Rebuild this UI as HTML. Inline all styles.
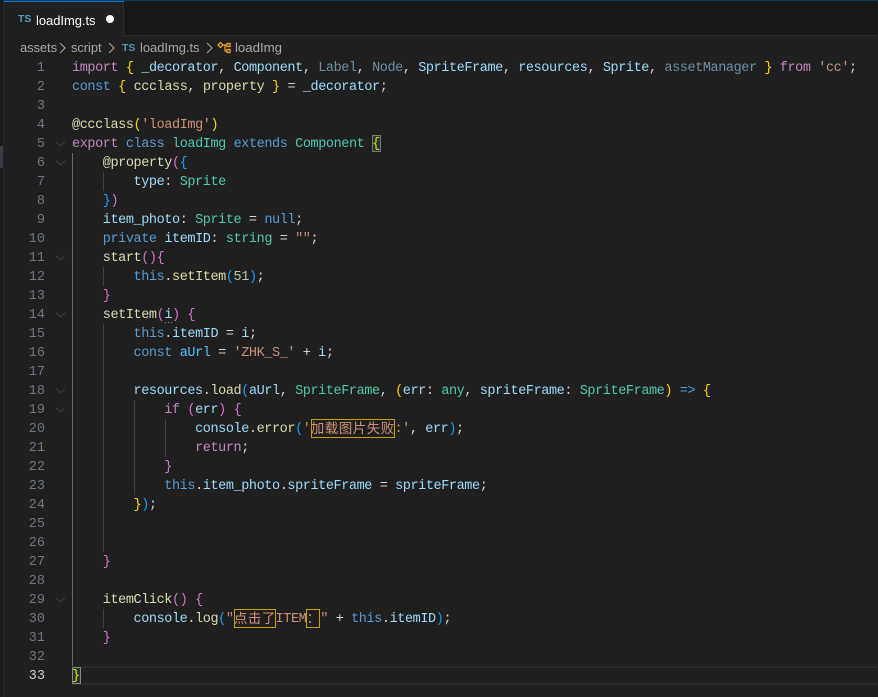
<!DOCTYPE html>
<html><head><meta charset="utf-8">
<style>
html,body{margin:0;padding:0;background:#1f1f1f}
#r{position:relative;width:878px;height:697px;overflow:hidden;background:#1f1f1f;font-family:"Liberation Mono",monospace}
.a{position:absolute}
.l{position:absolute;left:72px;height:19px;margin-top:1px;line-height:19px;font-size:13.5px;letter-spacing:-.41px;white-space:pre;color:#d4d4d4;font-family:"Liberation Mono","Noto Sans CJK SC",monospace}
.n{position:absolute;left:0;width:45px;text-align:right;height:19px;margin-top:1px;font:13.5px/19px "Liberation Mono",monospace;color:#6e7681}
.f{position:absolute;left:56px;width:9px;height:9px}
.g{position:absolute;width:1px}
.k{color:#c586c0}.b{color:#569cd6}.t{color:#4ec9b0}.v{color:#9cdcfe}.y{color:#dcdcaa}.s{color:#ce9178}.d{color:#6b8fa5}.c{color:#4fc1ff}
.h1{color:#ffd700}.h2{color:#da70d6}.h3{color:#179fff}
.z{display:inline-block;position:relative;top:-2px;width:14px;text-align:center;font-size:13.5px;letter-spacing:0;font-family:"Noto Sans CJK SC",sans-serif;line-height:19px;vertical-align:top}
.u{position:absolute;border:1px solid #c9a000;box-sizing:border-box;height:19px}
.ui{font-family:"Liberation Sans",sans-serif}
</style></head><body><div id="r">
<div class="a" style="left:0;top:0;width:878px;height:36px;background:#181818"></div>
<div class="a" style="left:0;top:0;width:878px;height:1px;background:#0b3a5c"></div>
<div class="a" style="left:4px;top:1px;width:120px;height:35px;background:#1f1f1f;border-right:1px solid #2b2b2b;box-sizing:border-box"></div>
<div class="a" style="left:4px;top:1px;width:120px;height:1px;background:#0078d4"></div>
<div class="a" style="left:124px;top:35px;width:754px;height:1px;background:#2b2b2b"></div>
<div class="a" style="left:0;top:0;width:3px;height:697px;background:#1a1a1a"></div>
<div class="a" style="left:3px;top:1px;width:1px;height:696px;background:#262626"></div>
<div class="a" style="left:0;top:146px;width:3px;height:22px;background:#3a3a40"></div>
<div class="a ui" style="left:18px;top:13px;font-size:10.5px;font-weight:700;color:#519aba;line-height:12px">TS</div>
<div class="a ui" style="left:36px;top:11px;font-size:13px;line-height:19px;color:#fff;letter-spacing:-.05px">loadImg.ts</div>
<div class="a" style="left:106px;top:15px;width:8px;height:8px;border-radius:50%;background:#fff"></div>

<div class="a ui" style="left:20px;top:38px;font-size:13px;line-height:19px;color:#a9a9a9;letter-spacing:-.1px">assets</div>
<svg class="a" style="left:59px;top:42px" width="8" height="12"><path d="M1 1L6 6L1 11" fill="none" stroke="#a9a9a9" stroke-width="1"/></svg>
<div class="a ui" style="left:71px;top:38px;font-size:13px;line-height:19px;color:#a9a9a9;letter-spacing:-.1px">script</div>
<svg class="a" style="left:108px;top:42px" width="8" height="12"><path d="M1 1L6 6L1 11" fill="none" stroke="#a9a9a9" stroke-width="1"/></svg>
<div class="a ui" style="left:122px;top:42px;font-size:10.5px;font-weight:700;color:#519aba;line-height:12px">TS</div>
<div class="a ui" style="left:140px;top:38px;font-size:13px;line-height:19px;color:#a9a9a9;letter-spacing:-.05px">loadImg.ts</div>
<svg class="a" style="left:206px;top:42px" width="8" height="12"><path d="M1 1L6 6L1 11" fill="none" stroke="#a9a9a9" stroke-width="1"/></svg>
<svg class="a" style="left:217px;top:41px" width="15" height="13"><g fill="none" stroke="#ee9d28" stroke-width="1.3"><path d="M1 4L3.5 1.5L6 4L3.5 6.5Z"/><path d="M6 4H10M8 4V10H10"/><rect x="10" y="2.5" width="3" height="3"/><rect x="10" y="8.5" width="3" height="3"/></g></svg>
<div class="a ui" style="left:235px;top:38px;font-size:13.3px;line-height:19px;color:#a9a9a9;letter-spacing:-.05px">loadImg</div>

<div class="a" style="left:72px;top:666px;width:806px;height:2px;background:#282828"></div>
<div class="a" style="left:72px;top:683px;width:806px;height:2px;background:#282828"></div>

<div class="g" style="left:72px;top:153px;height:513px;background:#6a6a6a"></div>
<div class="g" style="left:103px;top:172px;height:19px;background:#404040"></div>
<div class="g" style="left:103px;top:267px;height:19px;background:#404040"></div>
<div class="g" style="left:103px;top:324px;height:228px;background:#404040"></div>
<div class="g" style="left:103px;top:609px;height:19px;background:#404040"></div>
<div class="g" style="left:134px;top:400px;height:95px;background:#404040"></div>
<div class="g" style="left:165px;top:419px;height:38px;background:#404040"></div>

<div class="n" style="top:58px">1</div><div class="n" style="top:77px">2</div><div class="n" style="top:96px">3</div><div class="n" style="top:115px">4</div><div class="n" style="top:134px">5</div><div class="n" style="top:153px">6</div><div class="n" style="top:172px">7</div><div class="n" style="top:191px">8</div><div class="n" style="top:210px">9</div><div class="n" style="top:229px">10</div><div class="n" style="top:248px">11</div><div class="n" style="top:267px">12</div><div class="n" style="top:286px">13</div><div class="n" style="top:305px">14</div><div class="n" style="top:324px">15</div><div class="n" style="top:343px">16</div><div class="n" style="top:362px">17</div><div class="n" style="top:381px">18</div><div class="n" style="top:400px">19</div><div class="n" style="top:419px">20</div><div class="n" style="top:438px">21</div><div class="n" style="top:457px">22</div><div class="n" style="top:476px">23</div><div class="n" style="top:495px">24</div><div class="n" style="top:514px">25</div><div class="n" style="top:533px">26</div><div class="n" style="top:552px">27</div><div class="n" style="top:571px">28</div><div class="n" style="top:590px">29</div><div class="n" style="top:609px">30</div><div class="n" style="top:628px">31</div><div class="n" style="top:647px">32</div><div class="n" style="top:666px;color:#ccc">33</div>

<svg class="f" style="top:139px" viewBox="0 0 9 9"><path d="M0 2.5L4.5 7L9 2.5" fill="none" stroke="#3c3c3c"/></svg>
<svg class="f" style="top:158px" viewBox="0 0 9 9"><path d="M0 2.5L4.5 7L9 2.5" fill="none" stroke="#3c3c3c"/></svg>
<svg class="f" style="top:253px" viewBox="0 0 9 9"><path d="M0 2.5L4.5 7L9 2.5" fill="none" stroke="#3c3c3c"/></svg>
<svg class="f" style="top:310px" viewBox="0 0 9 9"><path d="M0 2.5L4.5 7L9 2.5" fill="none" stroke="#3c3c3c"/></svg>
<svg class="f" style="top:386px" viewBox="0 0 9 9"><path d="M0 2.5L4.5 7L9 2.5" fill="none" stroke="#3c3c3c"/></svg>
<svg class="f" style="top:405px" viewBox="0 0 9 9"><path d="M0 2.5L4.5 7L9 2.5" fill="none" stroke="#3c3c3c"/></svg>
<svg class="f" style="top:595px" viewBox="0 0 9 9"><path d="M0 2.5L4.5 7L9 2.5" fill="none" stroke="#3c3c3c"/></svg>

<div class="a" style="left:372px;top:135px;width:9px;height:17px;border:1px solid #777;box-sizing:border-box;background:#1f3a2a"></div>
<div class="a" style="left:72px;top:667px;width:9px;height:17px;border:1px solid #888;box-sizing:border-box;background:#1f3a2a"></div>
<div class="a" style="left:165px;top:322px;width:7px;height:1px;background:repeating-linear-gradient(90deg,#888 0 1px,transparent 1px 3px)"></div>

<div class="l" style="top:58px"><span class="k">import</span> <span class="h1">{</span> <span class="v">_decorator</span>, <span class="v">Component</span>, <span class="d">Label</span>, <span class="d">Node</span>, <span class="v">SpriteFrame</span>, <span class="v">resources</span>, <span class="v">Sprite</span>, <span class="d">assetManager</span> <span class="h1">}</span> <span class="k">from</span> <span class="s">'cc'</span>;</div>
<div class="l" style="top:77px"><span class="b">const</span> <span class="h1">{</span> <span class="y">ccclass</span>, <span class="y">property</span> <span class="h1">}</span> = <span class="v">_decorator</span>;</div>
<div class="l" style="top:115px"><span class="y">@ccclass</span><span class="h1">(</span><span class="s">'loadImg'</span><span class="h1">)</span></div>
<div class="l" style="top:134px"><span class="k">export</span> <span class="b">class</span> <span class="t">loadImg</span> <span class="b">extends</span> <span class="t">Component</span> <span class="h1">{</span></div>
<div class="l" style="top:153px">    <span class="y">@property</span><span class="h2">(</span><span class="h3">{</span></div>
<div class="l" style="top:172px">        <span class="v">type</span>: <span class="t">Sprite</span></div>
<div class="l" style="top:191px">    <span class="h3">}</span><span class="h2">)</span></div>
<div class="l" style="top:210px">    <span class="v">item_photo</span>: <span class="t">Sprite</span> = <span class="b">null</span>;</div>
<div class="l" style="top:229px">    <span class="b">private</span> <span class="v">itemID</span>: <span class="t">string</span> = <span class="s">""</span>;</div>
<div class="l" style="top:248px">    <span class="y">start</span><span class="h2">()</span><span class="h2">{</span></div>
<div class="l" style="top:267px">        <span class="b">this</span>.<span class="y">setItem</span><span class="h3">(</span><span style="color:#b5cea8">51</span><span class="h3">)</span>;</div>
<div class="l" style="top:286px">    <span class="h2">}</span></div>
<div class="l" style="top:305px">    <span class="y">setItem</span><span class="h2">(</span><span class="v">i</span><span class="h2">)</span> <span class="h2">{</span></div>
<div class="l" style="top:324px">        <span class="b">this</span>.<span class="v">itemID</span> = <span class="v">i</span>;</div>
<div class="l" style="top:343px">        <span class="b">const</span> <span class="c">aUrl</span> = <span class="s">'ZHK_S_'</span> + <span class="v">i</span>;</div>
<div class="l" style="top:381px">        <span class="v">resources</span>.<span class="y">load</span><span class="h3">(</span><span class="v">aUrl</span>, <span class="t">SpriteFrame</span>, <span class="h1">(</span><span class="v">err</span>: <span class="t">any</span>, <span class="v">spriteFrame</span>: <span class="t">SpriteFrame</span><span class="h1">)</span> <span class="b">=&gt;</span> <span class="h1">{</span></div>
<div class="l" style="top:400px">            <span class="k">if</span> <span class="h2">(</span><span class="v">err</span><span class="h2">)</span> <span class="h2">{</span></div>
<div class="l" style="top:419px">                <span class="v">console</span>.<span class="y">error</span><span class="h3">(</span><span class="s">'<span class="z">加</span><span class="z">载</span><span class="z">图</span><span class="z">片</span><span class="z">失</span><span class="z">败</span>:'</span>, <span class="v">err</span><span class="h3">)</span>;</div>
<div class="l" style="top:438px">                <span class="k">return</span>;</div>
<div class="l" style="top:457px">            <span class="h2">}</span></div>
<div class="l" style="top:476px">            <span class="b">this</span>.<span class="v">item_photo</span>.<span class="v">spriteFrame</span> = <span class="v">spriteFrame</span>;</div>
<div class="l" style="top:495px">        <span class="h1">}</span><span class="h3">)</span>;</div>
<div class="l" style="top:552px">    <span class="h2">}</span></div>
<div class="l" style="top:590px">    <span class="y">itemClick</span><span class="h2">()</span> <span class="h2">{</span></div>
<div class="l" style="top:609px">        <span class="v">console</span>.<span class="y">log</span><span class="h3">(</span><span class="s">"<span class="z">点</span><span class="z">击</span><span class="z">了</span>ITEM<span class="z">：</span>"</span> + <span class="b">this</span>.<span class="v">itemID</span><span class="h3">)</span>;</div>
<div class="l" style="top:628px">    <span class="h2">}</span></div>
<div class="l" style="top:666px"><span class="h1">}</span></div>

<div class="u" style="left:311px;top:419px;width:84px"></div>
<div class="u" style="left:234px;top:609px;width:42px"></div>
<div class="u" style="left:306px;top:609px;width:14px"></div>
</div></body></html>
